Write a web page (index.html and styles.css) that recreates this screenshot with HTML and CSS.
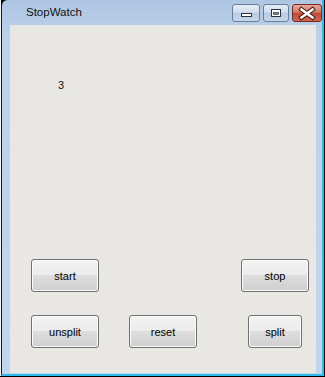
FILE: index.html
```html
<!DOCTYPE html>
<html>
<head>
<meta charset="utf-8">
<link rel="stylesheet" href="styles.css">
</head>
<body>
<div class="screen">
  <div class="outer">
    <div class="frame">
      <div class="titlebar">
        <span class="title">StopWatch</span>
        <div class="controls">
          <div class="cbtn cbtn-min">
            <svg width="28" height="18" viewBox="0 0 28 18"><rect x="9.5" y="9.5" width="10" height="3" fill="#fff" stroke="#2c3440"/></svg>
          </div>
          <div class="cbtn cbtn-max">
            <svg width="26" height="18" viewBox="0 0 26 18"><rect x="8.5" y="5.5" width="9" height="7" fill="#fff" stroke="#2c3440"/><rect x="10.5" y="8.5" width="5" height="2" fill="#6c7c92" stroke="#2c3440" stroke-width="0.6"/></svg>
          </div>
          <div class="cbtn cbtn-close">
            <svg width="30" height="18" viewBox="0 0 30 18"><path d="M9.5 5.5 L20.5 13.5 M20.5 5.5 L9.5 13.5" stroke="#4a1810" stroke-width="4.6" stroke-linecap="square"/><path d="M9.5 5.5 L20.5 13.5 M20.5 5.5 L9.5 13.5" stroke="#fff" stroke-width="2.6" stroke-linecap="square"/></svg>
          </div>
        </div>
      </div>
      <div class="body">
        <div class="client">
          <div class="value">3</div>
          <div class="row row-top">
            <button class="btn">start</button>
            <button class="btn">stop</button>
          </div>
          <div class="row row-bottom">
            <button class="btn">unsplit</button>
            <button class="btn btn-reset">reset</button>
            <button class="btn btn-split">split</button>
          </div>
        </div>
      </div>
    </div>
  </div>
</div>
</body>
</html>
```

FILE: styles.css
```css
html, body {
  margin: 0;
  padding: 0;
  background: #000;
}

.screen {
  width: 325px;
  height: 377px;
  background: #000;
  display: flex;
  align-items: flex-start;
}

.outer {
  width: 324px;
  height: 376px;
  box-sizing: border-box;
  border-left: 1px solid #f2f4f7;
  display: flex;
}

.frame {
  flex: 1;
  display: flex;
  flex-direction: column;
  box-sizing: border-box;
  border-left: 1px solid #1a1a1a;
  border-right: 2px solid #2ebcee;
  border-bottom: 2px solid #2ebcee;
  border-top-left-radius: 6px;
  background: linear-gradient(180deg, #aec6e2 0px, #bcd2eb 40px, #c0d6ee 100%);
}

.titlebar {
  height: 25px;
  flex: none;
  display: flex;
  align-items: flex-start;
  padding-left: 24px;
  box-sizing: border-box;
}

.title {
  font-family: "Liberation Sans", Arial, sans-serif;
  font-size: 11.5px;
  line-height: 14px;
  margin-top: 5px;
  color: #111;
}

.controls {
  margin-left: auto;
  display: flex;
  gap: 3px;
  padding-top: 4px;
}

.cbtn {
  height: 18px;
  box-sizing: border-box;
  border: 1px solid #6a7d98;
  border-radius: 3px;
  position: relative;
  overflow: hidden;
}

.cbtn svg {
  position: absolute;
  left: -1px;
  top: -1px;
}

.cbtn-min {
  width: 28px;
  background: linear-gradient(180deg, #e4ecf6 0%, #d2deec 45%, #b9cbe0 50%, #c6d6ea 100%);
}

.cbtn-max {
  width: 26px;
  background: linear-gradient(180deg, #e4ecf6 0%, #d2deec 45%, #b9cbe0 50%, #c6d6ea 100%);
}

.cbtn-close {
  width: 30px;
  border-color: #7b2a20;
  background: linear-gradient(180deg, #e6a898 0%, #d47a68 45%, #c24a36 50%, #d26450 100%);
}

.body {
  flex: 1;
  display: flex;
  padding: 0 6px 1px 8px;
}

.client {
  flex: 1;
  background: #e8e7e4;
  display: flex;
  flex-direction: column;
  padding: 54px 0 0 21px;
  box-sizing: border-box;
}

.value {
  margin-left: 27px;
  font-family: "Liberation Sans", Arial, sans-serif;
  font-size: 11px;
  line-height: 13px;
  color: #111;
}

.row {
  display: flex;
  align-items: flex-start;
}

.row-top {
  margin-top: 167px;
  justify-content: space-between;
  padding-right: 7px;
}

.row-bottom {
  margin-top: 23px;
}

.btn {
  width: 68px;
  height: 33px;
  box-sizing: border-box;
  margin: 0;
  padding: 0;
  border: 1px solid #707070;
  border-radius: 3px;
  background: linear-gradient(180deg, #f3f3f3 0%, #ebebeb 48%, #dddddd 50%, #cfcfcf 100%);
  box-shadow: inset 0 0 0 1px #fbfbfb;
  font-family: "Liberation Sans", Arial, sans-serif;
  font-size: 11px;
  color: #000;
  text-align: center;
}

.btn-reset {
  margin-left: 30px;
}

.btn-split {
  margin-left: 51px;
  width: 54px;
}
```
